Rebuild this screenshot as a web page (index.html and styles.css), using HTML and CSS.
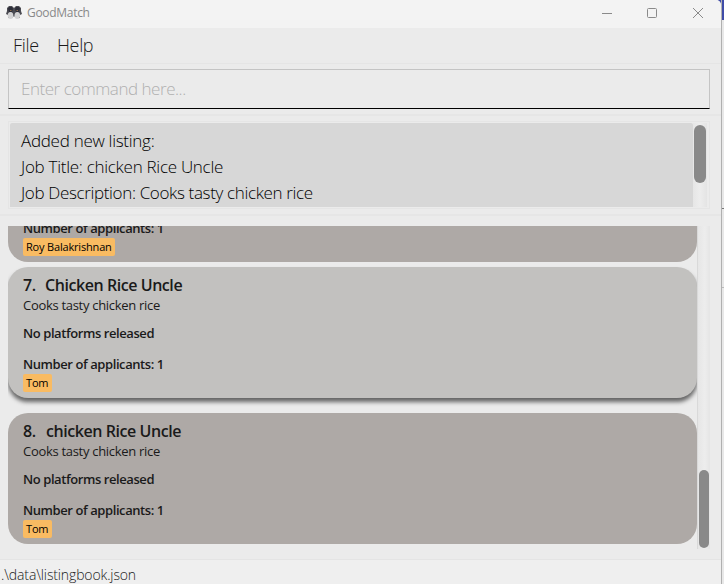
FILE: index.html
```html
<!DOCTYPE html>
<html lang="en">
<head>
<meta charset="utf-8">
<title>GoodMatch</title>
<link rel="stylesheet" href="styles.css">
</head>
<body>
<div class="screen">
<main class="window">
  <header class="titlebar">
    <svg class="logo" width="16" height="14" viewBox="0 0 16 14">
      <path d="M1 5 0 8l2 1v3h4l2-2 2 2h4V9l2-1-1-3V2L13 0h-3L8 2 6 0H3L1 2z" fill="#4a4a51"/>
      <path d="M2 2.5 3.5 1H6l1 2-1 3H3zM9 3l1-2h2.500L14 2.500 13 6h-3z" fill="#2d2e39"/>
      <ellipse cx="4.500" cy="9.500" rx="2.800" ry="3.600" fill="#d3d3d4"/>
      <ellipse cx="11.300" cy="9.500" rx="2.800" ry="3.600" fill="#d3d3d4"/>
      <path d="M4 4h1.500v1H4zM10.500 4H12v1h-1.500z" fill="#8a6a4c"/>
    </svg>
    <span class="app-name">GoodMatch</span>
    <svg class="controls" width="104" height="12" viewBox="0 0 104 12" fill="none" stroke="#8a8a8a">
      <path d="M0 6.500h10"/>
      <rect x="45.500" y="1.500" width="9" height="9" rx="1"/>
      <path d="m91 1 10 10M101 1 91 11"/>
    </svg>
  </header>
  <nav class="menu"><span class="file">File</span><span class="help">Help</span></nav>
  <section class="command"><div class="field"><span class="placeholder">Enter command here...</span></div></section>
  <section class="result">
    <div class="result-frame">
      <div class="result-text">
        <div class="r1">Added new listing:</div>
        <div class="r2">Job Title: chicken Rice Uncle</div>
        <div class="r3">Job Description: Cooks tasty chicken rice</div>
      </div>
      <div class="result-track"><div class="result-thumb"></div></div>
    </div>
  </section>
  <section class="listings">
    <div class="list">
      <article class="card clipped">
        <div class="count">Number of applicants: 1</div>
        <span class="tag wide">Roy Balakrishnan</span>
      </article>
      <article class="card selected">
        <h2><span class="index">7.</span><span class="name7">Chicken Rice Uncle</span></h2>
        <div class="description">Cooks tasty chicken rice</div>
        <div class="platforms">No platforms released</div>
        <div class="count">Number of applicants: 1</div>
        <span class="tag">Tom</span>
      </article>
      <article class="card">
        <h2><span class="index wider">8.</span><span class="name8">chicken Rice Uncle</span></h2>
        <div class="description">Cooks tasty chicken rice</div>
        <div class="platforms">No platforms released</div>
        <div class="count">Number of applicants: 1</div>
        <span class="tag">Tom</span>
      </article>
    </div>
    <div class="list-track"><div class="list-thumb"></div></div>
  </section>
  <footer><span class="path">.\data\listingbook.json</span></footer>
</main>
<aside class="behind"><div class="blue"></div><div class="mid"></div><div class="low"></div></aside>
</div>
</body>
</html>
```
FILE: styles.css
```css
* { box-sizing: border-box; }
body { margin: 0; width: 724px; height: 584px; overflow: hidden; font-family: "Open Sans", "Noto Sans", sans-serif; background: #ebebeb; color: #1a1a1a; }
.screen { display: flex; height: 584px; background: #3f4ca8; }
.window { width: 721px; height: 584px; display: flex; flex-direction: column; background: #ebebeb; border-top-right-radius: 5px; overflow: hidden; white-space: nowrap; }
.titlebar { height: 28px; flex: none; background: #f3f3f3; display: flex; align-items: center; padding: 0 15px 3px 6px; }
.logo { margin-right: 5px; }
.app-name { font-size: 12px; color: #898989; letter-spacing: -0.3px; }
.controls { margin-left: auto; }
.menu { height: 36px; flex: none; border-bottom: 1px solid #e5e5e5; display: flex; padding-left: 13px; font-size: 18px; line-height: 35px; font-weight: 300; letter-spacing: -0.35px; }
.file { width: 44px; }
.command { height: 52px; flex: none; padding: 5px 11px 0 8px; border-bottom: 2px solid #e6e6e6; }
.field { height: 40px; border: 1px solid #c4c4c4; border-bottom-color: #000; padding-left: 12px; font-size: 17px; line-height: 38px; font-weight: 300; color: #b0b0b0; letter-spacing: -0.47px; }
.result { height: 100px; flex: none; padding: 5px 11px 0 8px; border-bottom: 2px solid #e6e6e6; }
.result-frame { height: 88px; border: 1px solid #e5e5e5; padding: 1px; display: flex; }
.result-text { width: 683px; height: 84px; background: #d7d7d7; padding: 5px 11px; border-radius: 2px 2px 0 0; font-size: 17px; line-height: 26px; font-weight: 300; color: #000; overflow: hidden; letter-spacing: -0.28px; }
.r3 { letter-spacing: -0.35px; }
.result-track { width: 14px; padding: 2px 1px; background: linear-gradient(90deg, #e6e6e6, #ededed, #e4e4e4); }
.result-thumb { height: 58px; width: 12px; border-radius: 6px; background: #898989; }
.listings { height: 344px; flex: none; padding: 10px 11px 10px 8px; display: flex; border-bottom: 1px solid #e4e4e4; }
.list { width: 689px; height: 323px; overflow: hidden; }
.card { height: 131px; background: #aea9a6; border-radius: 20px; padding: 7px 15px 0; }
.clipped { display: flow-root; height: 36px; border-radius: 0 0 20px 20px; padding-top: 0; margin-bottom: 5px; }
.clipped .count { margin-top: -7px; }
.selected { background: #c2c1bf; margin-bottom: 15px; box-shadow: 0 4px 4px #656565; }
h2 { margin: 0; font-size: 16px; line-height: 22px; font-weight: 600; display: flex; letter-spacing: -0.44px; }
.index { width: 22px; }
.index.wider { width: 23px; }
.description, .platforms, .count { font-size: 13px; line-height: 19px; letter-spacing: -0.42px; }
.description { letter-spacing: -0.3px; }
.platforms { margin-top: 9px; font-weight: 600; }
.count { margin-top: 12px; font-weight: 600; }
.tag { display: block; width: 29px; height: 18px; border-radius: 2px; background: #f9bb62; padding-left: 3px; font-size: 11px; line-height: 18px; color: #000; letter-spacing: -0.18px; }
.tag.wide { width: 92px; }
.list-track { width: 13px; height: 323px; background: linear-gradient(90deg, #d9d9d9 0 1px, #e6e6e6 1px, #ededed 60%, #e5e5e5); padding: 244px 1px 0 2px; }
.list-thumb { width: 10px; height: 78px; border-radius: 5px; background: #898989; }
footer { height: 24px; background: #efefef; padding-left: 1px; font-size: 14px; line-height: 29px; font-weight: 300; letter-spacing: -0.13px; }
.behind { width: 3px; background: #e8e8e8; border-left: 1px solid #b0b0b0; }
.blue { height: 20px; background: #3f4ca8; }
.mid { height: 189px; border-bottom: 1px solid #777; }
.low { height: 79px; border-bottom: 1px solid #bbb; }
```
